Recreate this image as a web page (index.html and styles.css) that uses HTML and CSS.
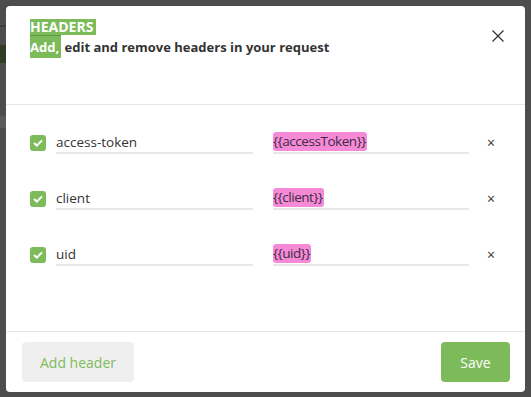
FILE: index.html
```html
<!DOCTYPE html>
<html>
<head>
<meta charset="utf-8">
<link rel="stylesheet" href="styles.css">
</head>
<body>
<div class="backdrop">
  <div class="side">
    <div class="side-line"></div>
    <div class="side-green"></div>
    <div class="side-grey"></div>
  </div>
  <div class="modal">
    <div class="modal-header">
      <div class="titles">
        <div class="title"><span class="hl">HEADERS</span></div>
        <div class="subtitle"><span class="hl hl-add">Add,</span> edit and remove headers in your request</div>
      </div>
      <button class="close" aria-label="Close">
        <svg width="12" height="12" viewBox="0 0 12 12"><path d="M0.5 0.5L11.5 11.5M11.5 0.5L0.5 11.5" stroke="#333" stroke-width="1.3" fill="none"/></svg>
      </button>
    </div>
    <div class="modal-body">
      <div class="row">
        <span class="check"><svg width="10" height="8" viewBox="0 0 10 8"><path d="M1 4L3.8 6.6L9 1.4" stroke="#fff" stroke-width="2" fill="none"/></svg></span>
        <div class="field"><span class="txt">access-token</span></div>
        <div class="field field-val"><span class="var">{{accessToken}}</span></div>
        <span class="remove">×</span>
      </div>
      <div class="row">
        <span class="check"><svg width="10" height="8" viewBox="0 0 10 8"><path d="M1 4L3.8 6.6L9 1.4" stroke="#fff" stroke-width="2" fill="none"/></svg></span>
        <div class="field"><span class="txt">client</span></div>
        <div class="field field-val"><span class="var">{{client}}</span></div>
        <span class="remove">×</span>
      </div>
      <div class="row">
        <span class="check"><svg width="10" height="8" viewBox="0 0 10 8"><path d="M1 4L3.8 6.6L9 1.4" stroke="#fff" stroke-width="2" fill="none"/></svg></span>
        <div class="field"><span class="txt">uid</span></div>
        <div class="field field-val"><span class="var">{{uid}}</span></div>
        <span class="remove">×</span>
      </div>
    </div>
    <div class="modal-footer">
      <button class="btn btn-add">Add header</button>
      <button class="btn btn-save">Save</button>
    </div>
  </div>
</div>
</body>
</html>
```
FILE: styles.css
```css
* { box-sizing: border-box; }
html, body { margin: 0; padding: 0; }
body {
  width: 531px;
  height: 397px;
  overflow: hidden;
  background: #4d4d4d;
  font-family: "Open Sans", "Noto Sans", sans-serif;
  color: #333;
}
.backdrop {
  position: relative;
  width: 531px;
  height: 397px;
  padding: 6px 6px 5px 6px;
}
.side {
  position: absolute;
  left: 0;
  top: 0;
  width: 6px;
  height: 397px;
}
.side-line { position: absolute; top: 25px; left: 0; width: 6px; height: 2px; background: #3f3f3f; }
.side-green { position: absolute; top: 45px; left: 0; width: 6px; height: 18px; background: #2f3d25; }
.side-grey { position: absolute; top: 116px; left: 0; width: 6px; height: 12px; background: #5a5a5f; }
.modal {
  width: 519px;
  height: 386px;
  background: #fff;
  border-radius: 4px;
  display: flex;
  flex-direction: column;
}
.modal-header {
  height: 99px;
  border-bottom: 1px solid #e6e6e6;
  padding: 13px 21px 0 24px;
  display: flex;
  justify-content: space-between;
  align-items: flex-start;
}
.title {
  font-size: 14px;
  font-weight: 700;
  line-height: 16px;
  height: 16px;
}
.hl {
  background: #7dbb5a;
  color: #fff;
  display: inline-block;
  padding-right: 3px;
}
.subtitle {
  font-size: 13px;
  font-weight: 700;
  line-height: 23px;
  color: #333;
}
.hl-add {
  line-height: 22px;
  border-top: 1px solid #5e9a40;
  padding-right: 2px;
}
.close {
  border: 0;
  background: none;
  padding: 0;
  margin-top: 11px;
  width: 12px;
  height: 12px;
  display: flex;
}
.modal-body {
  flex: 1;
  padding: 10px 0 0 24px;
  display: flex;
  flex-direction: column;
}
.row {
  height: 56px;
  display: flex;
  align-items: center;
}
.check {
  width: 16px;
  height: 16px;
  border-radius: 3px;
  background: #7dbb5a;
  display: flex;
  align-items: center;
  justify-content: center;
  margin-right: 10px;
}
.field {
  width: 197px;
  height: 22px;
  border-bottom: 2px solid #e8e8e8;
  font-size: 13.5px;
  line-height: 19px;
  display: flex;
  align-items: flex-start;
  margin-right: 20px;
  white-space: nowrap;
  margin-top: -1px;
}
.field-val { width: 196px; margin-right: 18px; }
.txt { color: #333; padding-top: 1px; }
.var {
  background: #f78ad7;
  border-radius: 3px;
  color: #3b2a46;
  height: 19px;
  letter-spacing: -0.45px;
  padding-right: 1px;
}
.remove {
  font-size: 14px;
  color: #333;
  line-height: 14px;
}
.modal-footer {
  height: 61px;
  border-top: 1px solid #e6e6e6;
  padding: 10px 15px 0 16px;
  display: flex;
  justify-content: space-between;
  align-items: flex-start;
}
.btn {
  height: 40px;
  border: 0;
  border-radius: 4px;
  font-family: "Open Sans", "Noto Sans", sans-serif;
  font-size: 14px;
}
.btn-add {
  width: 112px;
  background: #efefef;
  color: #7dbb5a;
}
.btn-save {
  width: 69px;
  background: #7dbb5a;
  color: #fff;
}
```
